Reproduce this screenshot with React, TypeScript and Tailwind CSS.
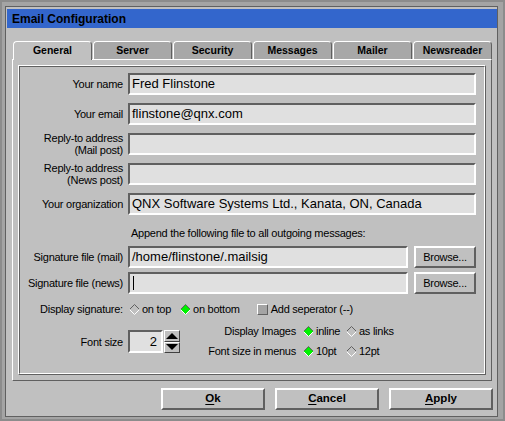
import React from 'react';

const raised = 'border-2 border-t-white border-l-white border-b-[#606060] border-r-[#606060]';
const sunken = 'border-2 border-t-[#606060] border-l-[#606060] border-b-white border-r-white';
const label = 'text-[11px] leading-[12px] tracking-[-0.25px] text-black';

function Diamond({ on }: { on?: boolean }) {
    return (
        <svg width="11" height="11" viewBox="0 0 11 11" className="shrink-0">
            <polygon points="5.5,0.5 10.5,5.5 5.5,10.5 0.5,5.5" fill={on ? '#00f000' : '#c0c0c0'} />
            <polyline points="0.5,5.5 5.5,0.5 10.5,5.5" fill="none" stroke="#606060" strokeWidth="1" />
            <polyline points="0.5,5.5 5.5,10.5 10.5,5.5" fill="none" stroke="#ffffff" strokeWidth="1" />
        </svg>
    );
}

function Option({ on, text, className = '' }: { on?: boolean; text: string; className?: string }) {
    return (
        <div className={`flex items-center ${className}`}>
            <Diamond on={on} />
            <span className={`ml-[2px] ${label}`}>{text}</span>
        </div>
    );
}

function Row({ children, text, className = '' }: { children?: React.ReactNode; text: React.ReactNode; className?: string }) {
    return (
        <div className={`flex h-[22px] items-center ${className}`}>
            <div className={`w-[103px] shrink-0 text-right ${label}`}>{text}</div>
            <div className="ml-[5px] flex flex-1 items-center">{children}</div>
        </div>
    );
}

function Field({ value, cursor }: { value?: string; cursor?: boolean }) {
    return (
        <div className={`flex h-[22px] flex-1 items-center bg-[#e0e0e0] pl-[2px] text-[13px] text-black ${sunken}`}>
            {value}
            {cursor && <span className="ml-[1px] h-[14px] w-px bg-black" />}
        </div>
    );
}

function Browse() {
    return (
        <button className={`ml-[6px] flex h-[22px] w-[62px] items-center justify-center bg-[#c0c0c0] ${label} ${raised}`}>
            Browse...
        </button>
    );
}

function Spin({ up }: { up?: boolean }) {
    return (
        <div className="flex flex-1 items-center justify-center border border-t-white border-l-white border-b-[#404040] border-r-[#404040] bg-[#c0c0c0]">
            <svg width="12" height="6" viewBox="0 0 12 6">
                <polygon points={up ? '6,0 12,6 0,6' : '0,0 12,0 6,6'} fill="#000" />
            </svg>
        </div>
    );
}

export default function App() {
    const tabs = ['General', 'Server', 'Security', 'Messages', 'Mailer', 'Newsreader'];

    return (
        <div className="h-[421px] w-[505px] overflow-hidden bg-[#8c8c8c] p-[2px] font-['Liberation_Sans',Arial,sans-serif]">
            <div className="h-full bg-[#a4a4a4] pl-[3px] pt-[4px]">
                {/* Window */}
                <div className="flex h-[411px] w-[493px] flex-col border border-[#606060] bg-[#c0c0c0]">
                    {/* Title bar */}
                    <div className="ml-[1px] mt-[2px] flex h-[19px] items-center bg-[#3366cc] pl-[5px] text-[12px] font-bold text-black">
                        Email Configuration
                    </div>

                    {/* Tabs */}
                    <div className="relative z-10 ml-[7px] mt-[13px] flex h-[18px] items-start gap-[1px]">
                        {tabs.map((t, i) => (
                            <div
                                key={t}
                                className={`flex w-[79px] items-center justify-center rounded-t-[4px] border-l border-r border-t border-l-white border-r-[#606060] border-t-white text-[10.5px] font-bold text-black ${
                                    i === 0 ? 'h-[19px] bg-[#c0c0c0] pb-px' : 'h-[18px] bg-[#a8a8a8]'
                                }`}
                            >
                                {t}
                            </div>
                        ))}
                    </div>

                    {/* Panel */}
                    <div className="ml-[6px] flex h-[322px] w-[480px] flex-col border border-b-[#606060] border-l-white border-r-[#606060] border-t-white p-[5px]">
                        <div className="flex-1 border border-b-[#606060] border-l-white border-r-[#606060] border-t-white">
                            <div className="h-full border border-b-white border-l-[#606060] border-r-white border-t-[#606060] pr-[8px] pt-[6px]">
                                <Row text="Your name">
                                    <Field value="Fred Flinstone" />
                                </Row>
                                <Row text="Your email" className="mt-[8px]">
                                    <Field value="flinstone@qnx.com" />
                                </Row>
                                <Row text={<>Reply-to address<br />(Mail post)</>} className="mt-[8px]">
                                    <Field />
                                </Row>
                                <Row text={<>Reply-to address<br />(News post)</>} className="mt-[8px]">
                                    <Field />
                                </Row>
                                <Row text="Your organization" className="mt-[8px]">
                                    <Field value="QNX Software Systems Ltd., Kanata, ON, Canada" />
                                </Row>

                                <div className={`ml-[111px] mt-[11px] flex h-[14px] items-center ${label}`}>
                                    Append the following file to all outgoing messages:
                                </div>

                                <Row text="Signature file (mail)" className="mt-[6px]">
                                    <Field value="/home/flinstone/.mailsig" />
                                    <Browse />
                                </Row>
                                <Row text="Signature file (news)" className="mt-[4px]">
                                    <Field cursor />
                                    <Browse />
                                </Row>

                                {/* Display signature */}
                                <div className="ml-[20px] mt-[8px] flex h-[14px] items-center">
                                    <span className={label}>Display signature:</span>
                                    <Option text="on top" className="ml-[6px]" />
                                    <Option on text="on bottom" className="ml-[9px]" />
                                    <div className="ml-[17px] flex items-center">
                                        <span className="h-[11px] w-[11px] border border-b-[#606060] border-l-white border-r-[#606060] border-t-white bg-[#a4a4a4]" />
                                        <span className={`ml-[3px] ${label}`}>Add seperator (--)</span>
                                    </div>
                                </div>

                                {/* Font size / images */}
                                <div className="mt-[8px] flex items-start">
                                    <div className="mt-[6px] flex h-[23px] items-center">
                                        <div className={`w-[103px] text-right ${label}`}>Font size</div>
                                        <div className={`ml-[5px] flex h-[23px] w-[35px] items-center justify-end bg-[#e0e0e0] pr-[4px] text-[13px] ${sunken}`}>
                                            2
                                        </div>
                                        <div className="ml-[1px] flex h-[23px] w-[16px] flex-col">
                                            <Spin up />
                                            <Spin />
                                        </div>
                                    </div>
                                    <div className="grid grid-cols-[116px_43px_auto] gap-y-[6px]">
                                        <div className={`flex h-[14px] items-center justify-end ${label}`}>Display Images</div>
                                        <Option on text="inline" className="ml-[7px] h-[14px]" />
                                        <Option text="as links" className="ml-[7px] h-[14px]" />
                                        <div className={`flex h-[14px] items-center justify-end ${label}`}>Font size in menus</div>
                                        <Option on text="10pt" className="ml-[7px] h-[14px]" />
                                        <Option text="12pt" className="ml-[7px] h-[14px]" />
                                    </div>
                                </div>
                            </div>
                        </div>
                    </div>

                    {/* Buttons */}
                    <div className="mt-[7px] flex justify-end gap-[10px] pr-[4px]">
                        {[
                            ['O', 'k'],
                            ['C', 'ancel'],
                            ['A', 'pply'],
                        ].map(([m, rest]) => (
                            <button
                                key={m + rest}
                                className={`flex h-[22px] w-[104px] items-center justify-center bg-[#c0c0c0] text-[11.5px] font-bold text-black ${raised}`}
                            >
                                <span className="underline underline-offset-2">{m}</span>
                                {rest}
                            </button>
                        ))}
                    </div>
                </div>
            </div>
        </div>
    );
}
